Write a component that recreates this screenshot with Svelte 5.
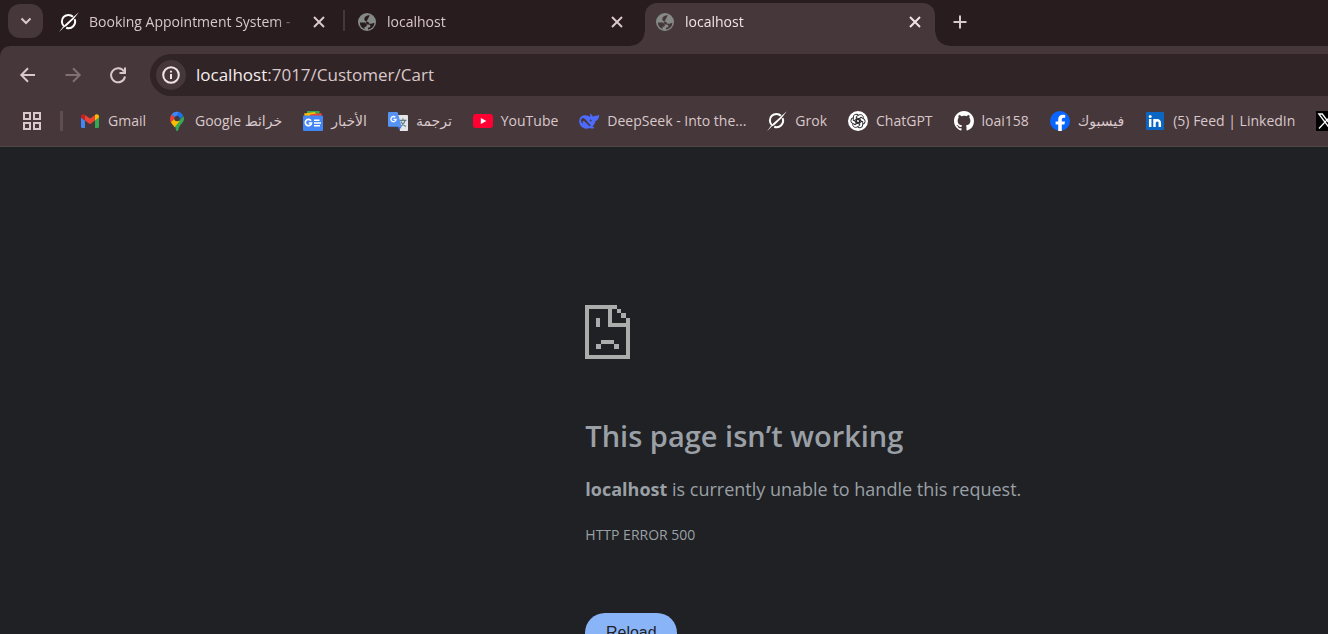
<script>
  const tabs = [
    { title: 'Booking Appointment System -', icon: 'grok', active: false },
    { title: 'localhost', icon: 'globe', active: false },
    { title: 'localhost', icon: 'globe', active: true }
  ];

  const bookmarks = [
    { name: 'Gmail', icon: 'gmail' },
    { name: 'خرائط Google', icon: 'maps', rtl: true },
    { name: 'الأخبار', icon: 'news', rtl: true },
    { name: 'ترجمة', icon: 'translate', rtl: true },
    { name: 'YouTube', icon: 'youtube' },
    { name: 'DeepSeek - Into the...', icon: 'deepseek' },
    { name: 'Grok', icon: 'grok' },
    { name: 'ChatGPT', icon: 'chatgpt' },
    { name: 'loai158', icon: 'github' },
    { name: 'فيسبوك', icon: 'facebook', rtl: true },
    { name: '(5) Feed | LinkedIn', icon: 'linkedin' },
    { name: '', icon: 'x' }
  ];

  const petals = [0, 60, 120, 180, 240, 300];
  let address = $state('localhost:7017/Customer/Cart');
</script>

{#snippet siteIcon(name)}
  <svg class="site-icon" viewBox="0 0 20 20" aria-hidden="true">
    {#if name === 'gmail'}
      <path fill="#4285f4" d="M1 6.5l4 3V17H2.200Q1 17 1 15.800z" />
      <path fill="#34a853" d="M15 9.500l4-3v9.300Q19 17 17.800 17H15z" />
      <path fill="#c5221f" d="M1 5.500C1 3.400 3.300 2.600 4.800 3.700L5 9.500 1 6.500z" />
      <path fill="#fbbc04" d="M15 4l.3-.3C16.800 2.600 19 3.500 19 5.500v1l-4 3z" />
      <path fill="#ea4335" d="M5 9.500V3.900l5 3.700 5-3.700v5.600L10 13.200z" />
    {:else if name === 'maps'}
      <path fill="#34a853" d="M16.300 5.100c.5 1 .7 2 .7 3 0 3.700-4.500 5.200-5.700 10.600-.2 1-.5 1.300-1.100 1.300-.7 0-1-.5-1.200-1.300-.4-1.700-.9-2.800-1.500-3.700z" />
      <path fill="#fbbc04" d="M3.700 10.700l3.700-4.100 5.200 3.600-5.100 6c-1.200-2-2.900-3.300-3.800-5.500z" />
      <path fill="#ea4335" d="M4.600 3.500l4 3.400-4.900 4.600C2.600 8.600 3 5.300 4.600 3.500z" />
      <path fill="#4285f4" d="M4.600 3.500C6 1.500 7.800.8 10 .8c.8 0 1.500.1 2.200.3L8.500 6.800z" />
      <path fill="#1a73e8" d="M12.200 1.100c1.800.6 3.200 1.900 4 3.600l-5 5.400-3-3z" />
      <circle cx="10" cy="7.600" r="2.700" fill="#46373a" />
    {:else if name === 'news'}
      <path fill="#34a853" d="M4 0h12.500v7H4z" />
      <path fill="#fbbc04" d="M1 2.500L12 1l2 5H2z" />
      <path fill="#ea4335" d="M7 3.500l11.500-1.500V8H7z" />
      <rect y="4.500" width="20" height="15.500" rx="1" fill="#4285f4" />
      <path fill="none" stroke="#fff" stroke-width="1.700" d="M8 9.800A3.100 3.100 0 1 0 8.500 12H5.700" />
      <path stroke="#fff" stroke-width="1.600" d="M11 9.300h5.500M11 12h7M11 14.700h6" />
    {:else if name === 'translate'}
      <path fill="#e4e5e6" d="M8 4h11.200q.8 0 .8.800v14.400q0 .8-.8.800H12z" />
      <path fill="none" stroke="#607d8b" stroke-width="1.200" d="M11.500 9.400h7M15 7.500v2M17 9.500c-.5 2.500-2 4.500-4.500 6M13 10.500c1 2.500 2.500 4 5 5" />
      <path fill="#3367d6" d="M9 15.500h4.500L11.500 19z" />
      <path fill="#5593f5" d="M1 1h8.500l4.200 14.700H1q-1 0-1-1V2q0-1 1-1z" />
      <path fill="none" stroke="#fff" stroke-width="1.300" d="M7.300 6.200a2.600 2.600 0 1 0 .8 2.200H5.500" />
    {:else if name === 'youtube'}
      <rect y="3" width="20" height="14" rx="3" fill="#ff0033" />
      <path fill="#fff" d="M7.800 6.900l5.600 3.100-5.600 3.100z" />
    {:else if name === 'deepseek'}
      <path fill="#4d6bfe" fill-rule="evenodd" d="M19.800 3.700c-.2-.1-.4.100-.6.200-.7.700-1.500 1-2.500.9-1.300-.1-2.100.3-2.800 1.100-.2-1.100-.8-1.700-1.600-2.300-.5-.4-.8-1.100-1.100-1.100-.4.100-.4 1.100-.1 2 .3 1 .8 1.300.8 1.600-.8-.1-1.700-.6-2.400-1C6.300 3.600 3.600 4 1.700 6-.3 8.300-.3 12 1.500 14.600c2.200 3 6.100 3.900 9.400 2.300 1 .5 2.600.8 3.900.4.900-.3.500-.8 0-1.100-.7-.4-1.300-.5-1.300-.8 1.500-1.700 2.600-3.400 3-5.500 1.900-.4 3-1.900 3.500-4.200.2-.7.100-1.700-.2-2zM10.500 15.200c-1.900-1.500-3.300-3.800-5-4.800-1-.6-2.100-.5-1.900.4.100.5.300.9.500 1.300-.6.600-1.400-.2-1.800-1.200-1-2.400.8-4.500 2.600-3.600 2.500 1.200 3.700 4.400 6.900 7.200-.3.300-.8.700-1.300.7zm.8-4.900c-.7-.3-.7-1.600-.2-1.800.9-.2 1.600.6 1.600 1.500-.4.500-.9.500-1.400.3z" />
    {:else if name === 'grok'}
      <path fill="none" stroke="#fff" stroke-width="2" d="M14 4.800A6.500 6.500 0 0 0 4.800 14M15.600 7.200A6.500 6.500 0 0 1 7.200 15.700" />
      <path fill="#fff" d="M19.800.3L14.500 7.200 7.500 14 4.700 15.400.2 19.900l3.600-5 2.600-2.700 7.800-7z" />
    {:else if name === 'chatgpt'}
      <circle cx="10" cy="10" r="10" fill="#fff" />
      <g fill="none" stroke="#252326" stroke-width="0.900">
        {#each petals as angle}
          <path transform="rotate({angle} 10 10)" d="M8.300 9V5.500L11 4c2.500-1.300 5 1 4.200 3.500M8.300 6.500L11.400 8.200v3.700" />
        {/each}
      </g>
    {:else if name === 'github'}
      <path fill="#fff" transform="scale(1.250)" d="M8 0C3.580 0 0 3.580 0 8c0 3.540 2.290 6.530 5.470 7.590.4.070.55-.17.55-.38 0-.19-.01-.82-.01-1.490-2.010.37-2.530-.49-2.690-.94-.09-.23-.48-.94-.82-1.130-.28-.15-.68-.52-.01-.53.63-.01 1.080.58 1.230.82.720 1.210 1.870.87 2.330.66.070-.52.28-.87.51-1.070-1.780-.2-3.640-.89-3.640-3.950 0-.87.31-1.590.82-2.150-.08-.2-.36-1.020.08-2.120 0 0 .67-.21 2.200.82A7.600 7.600 0 0 1 8 3.860c.68 0 1.360.09 2 .27 1.530-1.040 2.200-.82 2.200-.82.44 1.100.16 1.920.08 2.120.51.56.82 1.270.82 2.150 0 3.070-1.870 3.750-3.650 3.950.29.25.54.73.54 1.480 0 1.070-.01 1.930-.01 2.200 0 .21.15.46.55.38A8.010 8.010 0 0 0 16 8c0-4.420-3.580-8-8-8z" />
    {:else if name === 'facebook'}
      <circle cx="10" cy="10" r="10" fill="#0866ff" />
      <path fill="#fff" d="M8.200 20v-6.500H5.600v-3h2.600V9c0-3.700 1.700-5.300 5-5.300.8 0 1.500.1 2 .2v2.800c-2.500-.2-3.400.1-3.400 2.100v1.700H15l-.6 3h-2.600V20z" />
    {:else if name === 'linkedin'}
      <rect x="1" y="1" width="18" height="18" rx="1" fill="#0a66c2" />
      <circle cx="5.200" cy="5.400" r="1.500" fill="#fff" />
      <path fill="none" stroke="#fff" stroke-width="2.500" d="M5.200 8v8M9.500 8v8M9.500 12c0-3.500 5.300-4 5.300 0v4" />
    {:else if name === 'x'}
      <path d="M0 0h20v20H0z" />
      <path fill="none" stroke="#fff" stroke-width="1.300" d="M2.800 3h3.500l10.500 14h-3.400zM16.500 3L3 17.500" />
    {:else}
      <circle cx="10" cy="10" r="9" fill="#858a87" />
      <path class="land" d="M12.800 3.200C10 3.200 7.300 4.700 7.300 7c0 2 1.500 2.700 3.200 2.800.8 0 1 .5 1.200 1 .4.900 1.300 1 2.600.9 1-.1 2.400-.4 3-.9.2 3.400-2.600 6.400-6.300 6.700v-1.700c1.700-.2 2.500-1 2.400-2.100-.2-1.300-1.400-1.300-2.600-1.300-.9 0-1.300-.5-1.500-1-.3-.7-1-.9-2-.9H2.900c-.1 3 1.800 5.600 4.600 6.600v-2.300c1.400.1 2.300-.5 2.300-1.600 0-.8-.5-1.400-1.300-1.600" />
    {/if}
  </svg>
{/snippet}

<div class="browser">
  <header>
    <div class="tab-strip">
      <button class="tab-search" aria-label="Search tabs">
        <svg viewBox="0 0 16 16"><path d="M3.500 5.500L8 10l4.500-4.500" /></svg>
      </button>
      <div class="tabs">
        {#each tabs as tab}
          <div class="tab" class:active={tab.active}>
            {@render siteIcon(tab.icon)}
            <span class="title">{tab.title}</span>
            <button class="close" aria-label="Close tab">
              <svg viewBox="0 0 16 16"><path d="M3 3l10 10M13 3L3 13" /></svg>
            </button>
          </div>
        {/each}
      </div>
      <button class="new-tab" aria-label="New tab">
        <svg viewBox="0 0 16 16"><path d="M8 1.500v13M1.500 8h13" /></svg>
      </button>
    </div>

    <div class="toolbar">
      <nav class="controls" aria-label="Navigation">
        <button aria-label="Back"><svg viewBox="0 0 20 20"><path d="M17 10H3.500M10 3.300L3.300 10l6.700 6.700" /></svg></button>
        <button aria-label="Forward" disabled><svg viewBox="0 0 20 20"><path d="M2.500 10h14M10 3.300l6.700 6.700-6.700 6.700" /></svg></button>
        <button aria-label="Reload page"><svg viewBox="0 0 20 20"><path d="M16 6.500A7 7 0 1 0 17 11.500M17 2.500V8h-5.500" /></svg></button>
      </nav>
      <div class="omnibox">
        <button class="info" aria-label="View site information">
          <svg viewBox="0 0 20 20"><circle cx="10" cy="10" r="7.800" /><path d="M10 9v5M10 5.800v1.700" /></svg>
        </button>
        <div class="address">
          <span class="url" aria-hidden="true"><b>{address.split(':')[0]}</b>{address.slice(address.indexOf(':'))}</span>
          <input aria-label="Address and search bar" bind:value={address} />
        </div>
      </div>
    </div>

    <nav class="bookmarks" aria-label="Bookmarks">
      <button class="apps" aria-label="Tab groups">
        <svg viewBox="0 0 20 20"><path d="M2 2h6v6H2zM12 2h6v6h-6zM2 12h6v6H2zM12 12h6v6h-6z" /></svg>
      </button>
      <div class="links">
        {#each bookmarks as item}
          <a href="#{item.icon}" aria-label={item.name || 'X'}>
            {@render siteIcon(item.icon)}
            {#if item.name}<span dir={item.rtl ? 'rtl' : 'ltr'}>{item.name}</span>{/if}
          </a>
        {/each}
      </div>
    </nav>
  </header>

  <main>
    <svg class="sad-page" viewBox="0 0 45 54" aria-hidden="true">
      <path d="M0 0h32v4H4v46h37V22H23V4h4v14h14v-5h4v41H0zM32 4h4v4h-4zM36 8h5v5h-5zM11 13h4v9h-4zM16 35h13v4H16zM11 39h5v5h-5zM29 39h5v5h-5z" />
    </svg>
    <h1>This page isn’t working</h1>
    <p><strong>localhost</strong> is currently unable to handle this request.</p>
    <div class="code">HTTP ERROR 500</div>
    <button class="reload">Reload</button>
  </main>
</div>

<style>
  :global(body) {
    margin: 0;
    background: #202124;
    overflow: hidden;
  }

  .browser {
    height: 100vh;
    overflow: hidden;
    font-family: "Open Sans", "Noto Sans", "DejaVu Sans", sans-serif;
    font-size: 14px;
    color: #d9c8cb;
  }

  button {
    display: grid;
    place-items: center;
    padding: 0;
    border: 0;
    background: none;
    color: inherit;
    font: inherit;
  }

  button svg {
    fill: none;
    stroke: currentColor;
    stroke-width: 2;
  }

  header {
    background: #281c1e;
    border-bottom: 1px solid #4f4648;
  }

  .site-icon {
    flex: none;
    width: 20px;
    height: 20px;
  }

  .land {
    fill: #281c1e;
  }

  .tab-strip {
    display: flex;
    height: 46px;
    padding-left: 8px;
  }

  .tab-search {
    flex: none;
    width: 35px;
    height: 34px;
    margin-top: 4px;
    border-radius: 12px;
    background: #46373a;
  }

  .tab-search svg {
    width: 16px;
    height: 16px;
  }

  .tabs {
    display: flex;
    gap: 8px;
    margin-left: 6px;
  }

  .tab {
    position: relative;
    display: flex;
    align-items: center;
    box-sizing: border-box;
    width: 290px;
    height: 43px;
    margin-top: 3px;
    padding: 0 12px 6px 10px;
  }

  .tab:nth-child(2)::before {
    content: "";
    position: absolute;
    left: -4px;
    top: 7px;
    width: 2px;
    height: 21px;
    background: #46373a;
  }

  .tab.active {
    border-radius: 12px 12px 0 0;
    background: #46373a;
    color: #f0e4e6;
  }

  .tab.active .land {
    fill: #46373a;
  }

  .tab.active::before,
  .tab.active::after {
    content: "";
    position: absolute;
    bottom: 0;
    width: 14px;
    height: 14px;
  }

  .tab.active::before {
    right: 100%;
    background: radial-gradient(circle at 0 0, transparent 13px, #46373a 14px);
  }

  .tab.active::after {
    left: 100%;
    background: radial-gradient(circle at 100% 0, transparent 13px, #46373a 14px);
  }

  .title {
    flex: 1;
    margin: 0 12px 0 10px;
    overflow: hidden;
    white-space: nowrap;
    mask-image: linear-gradient(to left, transparent, #000 24px);
  }

  .close svg {
    display: block;
    width: 16px;
    height: 16px;
  }

  .new-tab {
    width: 50px;
    height: 43px;
  }

  .new-tab svg {
    width: 16px;
    height: 16px;
  }

  .toolbar,
  .bookmarks {
    display: flex;
    align-items: center;
    background: #46373a;
  }

  .toolbar {
    height: 42px;
    padding: 8px 0 0 18px;
    border-radius: 10px 0 0 0;
  }

  .controls {
    display: flex;
    gap: 25px;
  }

  .controls svg {
    display: block;
    width: 20px;
    height: 20px;
  }

  .controls button:disabled {
    color: #816f73;
  }

  .omnibox {
    flex: 1;
    display: flex;
    align-items: center;
    height: 42px;
    margin-left: 22px;
    padding-left: 6px;
    border-radius: 21px 0 0 21px;
    background: #302426;
  }

  .info {
    width: 30px;
    height: 30px;
    border-radius: 50%;
    background: #46373a;
    color: #f0e4e6;
  }

  .info svg {
    width: 20px;
    height: 20px;
  }

  .address {
    flex: 1;
    display: grid;
    margin-left: 10px;
    font-size: 17px;
    line-height: 24px;
  }

  .url,
  .address input {
    grid-area: 1 / 1;
  }

  .url b {
    color: #f6eeef;
    font-weight: 400;
  }

  .address input {
    padding: 0;
    border: 0;
    outline: 0;
    background: none;
    color: transparent;
    font: inherit;
  }

  .bookmarks {
    gap: 17px;
    height: 50px;
    padding-left: 22px;
  }

  .links {
    display: flex;
    gap: 21px;
  }

  .links a {
    flex: none;
    display: flex;
    align-items: center;
    gap: 8px;
    color: inherit;
    line-height: 20px;
    text-decoration: none;
    white-space: nowrap;
  }

  .apps {
    flex: none;
    width: 41px;
    border-right: 3px solid #5e4e51;
    place-items: center start;
  }

  .apps svg {
    width: 20px;
    height: 20px;
  }

  main {
    width: min(600px, 44%);
    margin-left: 44%;
    padding: 158px 0 0 1px;
    color: #9aa0a6;
  }

  .sad-page {
    display: block;
    width: 45px;
    height: 54px;
    fill: #acacac;
  }

  h1 {
    margin: 57px 0 0;
    font-size: 29px;
    font-weight: 600;
    line-height: 40px;
  }

  p {
    margin: 20px 0 0;
    font-size: 18px;
    line-height: 26px;
    white-space: nowrap;
  }

  .code {
    margin-top: 23px;
    line-height: 20px;
  }

  .reload {
    width: 92px;
    height: 40px;
    margin-top: 68px;
    border-radius: 20px;
    background: #8ab4f8;
    color: #202124;
    font: 16px "Liberation Sans", Arial, sans-serif;
  }
</style>
